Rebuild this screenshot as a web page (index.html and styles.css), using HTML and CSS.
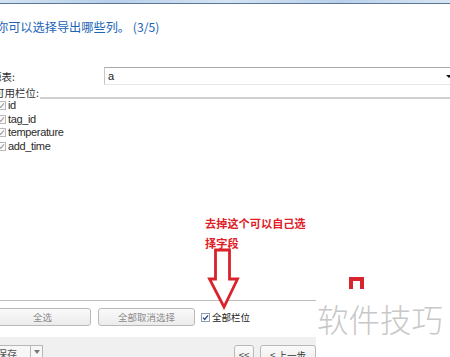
FILE: index.html
```html
<!DOCTYPE html>
<html lang="zh-CN">
<head>
<meta charset="utf-8">
<title>导出向导</title>
<link rel="stylesheet" href="styles.css">
</head>
<body>
<div class="window">
  <div class="caption"></div>
  <h1 class="title">你可以选择导出哪些列。 (3/5)</h1>

  <div class="source-row">
    <span class="source-label">源表:</span>
    <div class="combo">
      <span class="combo-value">a</span>
      <span class="combo-arrow"></span>
    </div>
  </div>

  <div class="fields-label"><span>可用栏位:</span></div>
  <ul class="field-list">
    <li><svg class="check" viewBox="0 0 9 9"><rect x="0.5" y="0.5" width="8" height="8" fill="#fbfbfb" stroke="#b9b9b9"/><path d="M2 4.6 L3.7 6.4 L7 2.3" fill="none" stroke="#a3a3a3" stroke-width="1.2"/></svg>id</li>
    <li><svg class="check" viewBox="0 0 9 9"><rect x="0.5" y="0.5" width="8" height="8" fill="#fbfbfb" stroke="#b9b9b9"/><path d="M2 4.6 L3.7 6.4 L7 2.3" fill="none" stroke="#a3a3a3" stroke-width="1.2"/></svg>tag_id</li>
    <li><svg class="check" viewBox="0 0 9 9"><rect x="0.5" y="0.5" width="8" height="8" fill="#fbfbfb" stroke="#b9b9b9"/><path d="M2 4.6 L3.7 6.4 L7 2.3" fill="none" stroke="#a3a3a3" stroke-width="1.2"/></svg>temperature</li>
    <li><svg class="check" viewBox="0 0 9 9"><rect x="0.5" y="0.5" width="8" height="8" fill="#fbfbfb" stroke="#b9b9b9"/><path d="M2 4.6 L3.7 6.4 L7 2.3" fill="none" stroke="#a3a3a3" stroke-width="1.2"/></svg>add_time</li>
  </ul>

  <div class="actions">
    <button class="btn btn-wide" disabled>全选</button>
    <button class="btn btn-wide" disabled>全部取消选择</button>
    <label class="all-fields"><svg class="check" viewBox="0 0 9 9"><rect x="0.5" y="0.5" width="8" height="8" fill="#fff" stroke="#8c9cb2"/><path d="M2 4.6 L3.7 6.4 L7 2.3" fill="none" stroke="#24458e" stroke-width="1.3"/></svg>全部栏位</label>
  </div>

  <div class="footer">
    <div class="save-menu">
      <span class="save-text">保存</span>
      <span class="save-drop"><span class="tri"></span></span>
    </div>
    <div class="nav">
      <button class="btn nav-btn nav-first">&lt;&lt;</button>
      <button class="btn nav-btn nav-prev">&lt; 上一步</button>
    </div>
  </div>

  <!-- annotation over the dialog -->
  <div class="note">去掉这个可以自己选<br>择字段</div>
  <svg class="note-arrow" width="36" height="62" viewBox="0 0 36 62">
    <path d="M10.5 2 H24.5 V31 H32.5 L19 59 L4.5 31 H10.5 Z" fill="#fff" stroke="#d9222b" stroke-width="2.8" stroke-linejoin="miter"/>
  </svg>

  <div class="watermark">
    <svg class="wm-logo" width="15" height="12" viewBox="0 0 15 12">
      <path d="M0 12 V0 H15 V12 H11 V4 H4 V12 Z" fill="#d8242d"/>
    </svg>
    <div class="wm-text">软件技巧</div>
  </div>
</div>
</body>
</html>
```

FILE: styles.css
```css
body {
  margin: 0;
  background: #fff;
  font-family: "Noto Sans CJK SC", "Noto Sans", sans-serif;
}

.window {
  position: relative;
  width: 450px;
  height: 357px;
  overflow: hidden;
  color: #222;
}

/* window caption strip */
.caption {
  height: 3px;
  background: linear-gradient(90deg, #d3e3f3, #b7cfe9 25%, #d4e4f4 50%, #b9d0ea 75%, #d6e5f3);
  border-bottom: 1px solid #5c7696;
}

.title {
  margin: 14px 0 0 -4px;
  font-size: 12.2px;
  font-weight: 400;
  line-height: 18px;
  color: #2063b5;
  white-space: nowrap;
}

/* source table row */
.source-row {
  display: flex;
  align-items: center;
  height: 18px;
  margin-top: 31px;
}

.source-label {
  flex: none;
  width: 113px;
  margin-left: -9px;
  font-size: 10.5px;
  color: #333;
}

.combo {
  flex: 1;
  display: flex;
  align-items: center;
  height: 18px;
  box-sizing: border-box;
  padding-left: 3px;
  border-top: 1px solid #a9a9a9;
  border-left: 1px solid #c6c6c6;
  border-bottom: 1px solid #e6e6e6;
  font-family: "Liberation Sans", sans-serif;
  font-size: 11px;
}

.combo-arrow {
  margin-left: auto;
  margin-right: -2px;
  border-left: 3px solid transparent;
  border-right: 3px solid transparent;
  border-top: 3px solid #111;
}

/* available fields */
.fields-label {
  position: relative;
  z-index: 1;
  height: 12px;
  margin-left: -6px;
  font-size: 10.5px;
  line-height: 16px;
  color: #333;
}

.fields-label span {
  background: #fff;
  padding-right: 1px;
}

.field-list {
  list-style: none;
  margin: 0;
  padding: 0;
  height: 201px;
  border-top: 2px solid #d0d0d0;
  border-bottom: 1px solid #bdbdbd;
  font-family: "Liberation Sans", sans-serif;
  font-size: 11px;
  letter-spacing: -0.35px;
  color: #2b2b2b;
}

.field-list li {
  display: flex;
  align-items: center;
  height: 13.5px;
  line-height: 13.5px;
  margin-left: -3px;
}

.check {
  flex: none;
  width: 9px;
  height: 9px;
  margin-right: 2px;
}

/* select buttons */
.actions {
  display: flex;
  align-items: center;
  gap: 7px;
  height: 18px;
  padding-top: 7px;
  margin-left: -6px;
}

.btn {
  box-sizing: border-box;
  padding: 0;
  border: 1px solid #b9b9b9;
  border-radius: 3px;
  background: linear-gradient(#fafafa, #ececec);
  font-family: inherit;
  font-size: 9.5px;
  color: #333;
}

.btn-wide {
  width: 97px;
  height: 18px;
  color: #8c8c8c;
}

.all-fields {
  display: flex;
  align-items: center;
  margin-left: -1px;
  font-size: 9.5px;
  color: #222;
}

/* footer bar */
.footer {
  display: flex;
  align-items: flex-start;
  width: 316px;
  height: 12px;
  margin-top: 11px;
  padding-top: 8px;
  background: #f0f0f0;
}

.save-menu {
  display: flex;
  height: 16px;
  margin-left: -4px;
  box-sizing: border-box;
  border: 1px solid #b7b7b7;
  background: #f7f7f7;
  font-size: 10px;
  color: #555;
}

.save-text {
  width: 33px;
  line-height: 16px;
  border-right: 1px solid #b7b7b7;
}

.save-drop {
  display: flex;
  justify-content: center;
  width: 11px;
  padding-top: 4px;
}

.tri {
  width: 0;
  height: 0;
  border-left: 3.5px solid transparent;
  border-right: 3.5px solid transparent;
  border-top: 4px solid #777;
}

.nav {
  display: flex;
  gap: 6px;
  margin-left: auto;
}

.nav-btn {
  height: 20px;
}

.nav-first {
  width: 20px;
}

.nav-prev {
  width: 56px;
}

/* annotation */
.note {
  position: absolute;
  left: 205px;
  top: 213px;
  font-size: 11.2px;
  font-weight: 700;
  line-height: 20px;
  color: #df2027;
}

.note-arrow {
  position: absolute;
  left: 205px;
  top: 248px;
}

/* site mark over the lower right corner */
.watermark {
  position: absolute;
  left: 316px;
  top: 262px;
  right: 0;
  bottom: 0;
  background: #fff;
  padding: 15px 0 0 33px;
}

.wm-logo {
  display: block;
}

.wm-text {
  margin: 9px 0 0 -32px;
  font-size: 31.5px;
  font-weight: 300;
  line-height: 40px;
  color: #c8c8c8;
  white-space: nowrap;
}
```
